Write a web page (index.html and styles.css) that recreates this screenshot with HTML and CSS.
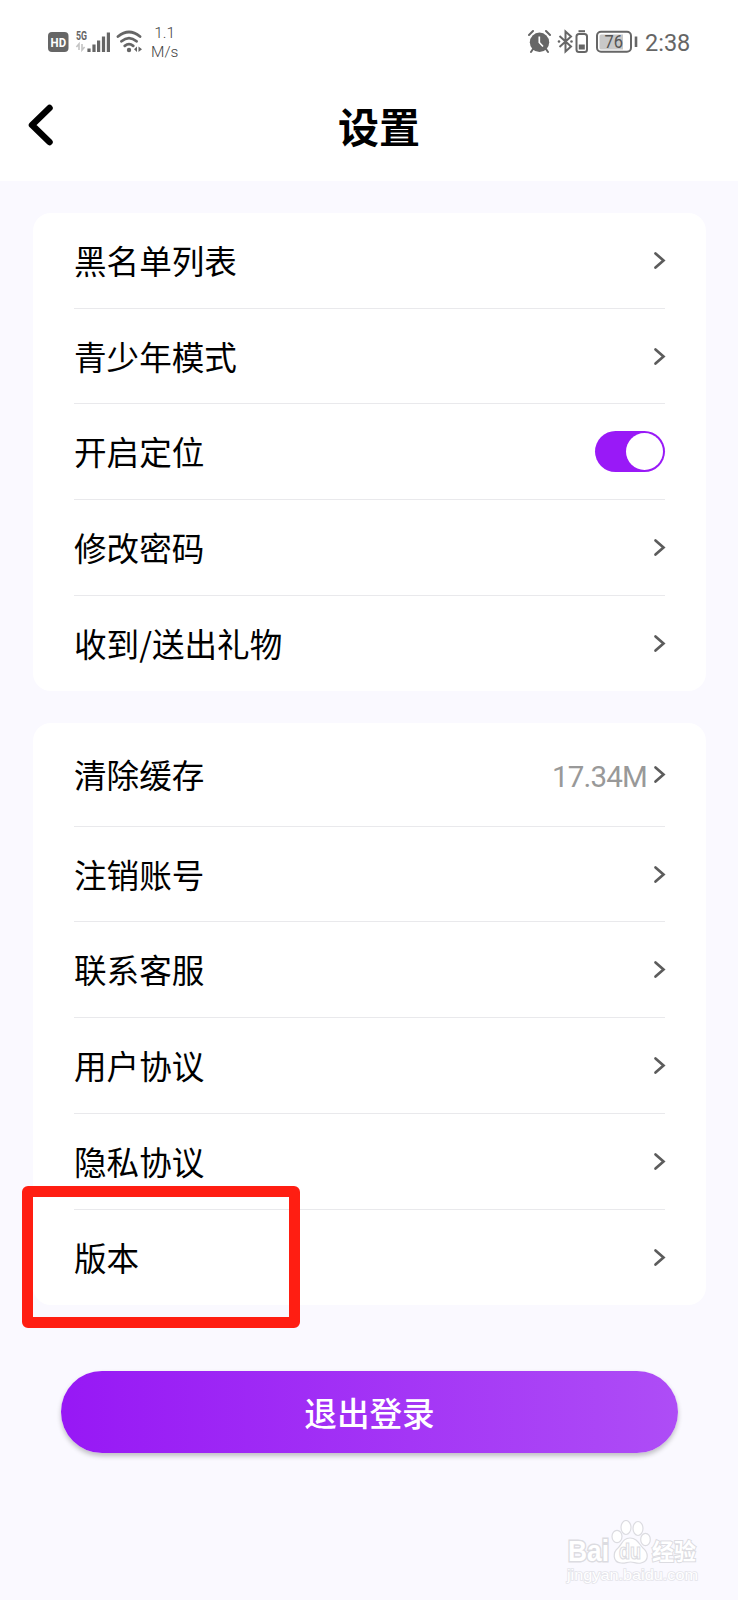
FILE: index.html
```html
<!DOCTYPE html>
<html lang="zh-CN">
<head>
<meta charset="utf-8">
<title>设置</title>
<link rel="stylesheet" href="styles.css">
</head>
<body>
	<svg width="0" height="0" class="defs">
		<symbol id="arrow" viewBox="0 0 13 19"><path d="M2.5 2.5L10.5 9.5L2.5 16.5" fill="none" stroke="#5c5c5c" stroke-width="2.7" stroke-linecap="round" stroke-linejoin="miter"/></symbol>
	</svg>
	<div class="status">
		<svg class="status-left" width="94" height="26" viewBox="0 0 94 26">
			<rect x="0" y="3" width="20.5" height="20" rx="4" fill="#666"/>
			<text x="2.6" y="17.8" class="hd" textLength="15.5" lengthAdjust="spacingAndGlyphs">HD</text>
			<text x="28" y="10.5" class="g5" textLength="11" lengthAdjust="spacingAndGlyphs">5G</text>
			<path d="M31 21V15L28.4 18M34 15V21L36.6 18" fill="none" stroke="#c4c4c4" stroke-width="1.6"/>
			<path d="M41 19.5V23M46 15.5V23M50.6 11.5V23M55.5 7.5V23M60.4 3.5V23" stroke="#666" stroke-width="3.2"/>
			<path d="M70 7.5Q81 -1.5 92 7.5M73.5 12.3Q81 6 88.5 12.3M76.8 16.8Q81 13.5 85.2 16.8" fill="none" stroke="#666" stroke-width="2.8" stroke-linecap="round"/>
			<circle cx="81" cy="21" r="2.2" fill="#666"/>
			<path d="M89 17.5V23L86 20.2ZM90.5 17.5V23L94 20.2Z" fill="#666"/>
		</svg>
		<div class="speed">1.1<br>M/s</div>
		<svg class="status-right" width="111" height="26" viewBox="0 0 111 26">
			<circle cx="11.5" cy="13.3" r="9.7" fill="#666"/>
			<path d="M1 6L5 2M22 6L18 2M5 20L3 23M18 20L20 23" stroke="#666" stroke-width="2" stroke-linecap="round"/>
			<path d="M11.3 7.5V13.5L15 17.5" fill="none" stroke="#fff" stroke-width="1.7"/>
			<path d="M31.5 7L43 17.5L37.5 22.5V2.5L43 7.5L31.5 18" fill="none" stroke="#666" stroke-width="2"/>
			<circle cx="31" cy="12.5" r="1.3" fill="#666"/><circle cx="43.5" cy="12.5" r="1.3" fill="#666"/>
			<rect x="48.5" y="5" width="10.5" height="18" rx="2.500" fill="none" stroke="#666" stroke-width="2"/>
			<path d="M50.5 2.2H57" stroke="#666" stroke-width="2"/>
			<rect x="50.8" y="15.5" width="6" height="5" fill="#666"/>
			<rect x="69" y="2.8" width="34" height="20" rx="4" fill="none" stroke="#666" stroke-width="2"/>
			<path d="M73 5.5H95V20.5H73Q71.5 20.5 71.5 19V7Q71.5 5.5 73 5.5Z" fill="#c8c8c8"/>
			<text x="76.5" y="18.8" class="battery" textLength="18.5" lengthAdjust="spacingAndGlyphs">76</text>
			<path d="M108 7.5V18" stroke="#666" stroke-width="2.6"/>
		</svg>
		<div class="clock">2:38</div>
	</div>
	<div class="header">
		<svg class="back" width="26" height="42" viewBox="0 0 26 42"><path d="M21.5 4L4 21L21.5 38" fill="none" stroke="#000" stroke-width="6.5" stroke-linecap="round" stroke-linejoin="round"/></svg>
		<h1>设置</h1>
	</div>
	<div class="main">
		<div class="card">
			<div class="row"><span>黑名单列表</span><svg class="arrow"><use href="#arrow"/></svg></div>
			<div class="row"><span>青少年模式</span><svg class="arrow"><use href="#arrow"/></svg></div>
			<div class="row"><span>开启定位</span><div class="switch"><i></i></div></div>
			<div class="row"><span>修改密码</span><svg class="arrow"><use href="#arrow"/></svg></div>
			<div class="row"><span>收到/送出礼物</span><svg class="arrow"><use href="#arrow"/></svg></div>
		</div>
		<div class="card">
			<div class="row tall"><span>清除缓存</span><em>17.34M</em><svg class="arrow"><use href="#arrow"/></svg></div>
			<div class="row"><span>注销账号</span><svg class="arrow"><use href="#arrow"/></svg></div>
			<div class="row"><span>联系客服</span><svg class="arrow"><use href="#arrow"/></svg></div>
			<div class="row"><span>用户协议</span><svg class="arrow"><use href="#arrow"/></svg></div>
			<div class="row"><span>隐私协议</span><svg class="arrow"><use href="#arrow"/></svg></div>
			<div class="row"><span>版本</span><svg class="arrow"><use href="#arrow"/></svg><div class="mark"></div></div>
		</div>
		<div class="logout">退出登录</div>
	</div>
	<svg class="watermark" width="140" height="70" viewBox="0 0 140 70">
		<g fill="#fff" stroke="#dcdce1" stroke-width="1.2">
			<text x="8" y="40.500" class="wm-logo" textLength="41" lengthAdjust="spacingAndGlyphs">Bai</text>
			<ellipse cx="57" cy="16.5" rx="5" ry="6.2"/>
			<ellipse cx="66" cy="7.5" rx="5" ry="7"/>
			<ellipse cx="78" cy="8.5" rx="5" ry="7"/>
			<ellipse cx="85.5" cy="19.5" rx="4.8" ry="6.2"/>
			<path d="M70 18C63 18 62 24 58 28C53 32 52 42 61 43C65 43.5 67 42 70.5 42C74 42 77 44 81 43C90 41 88 32 83 28C79 24 77 18 70 18Z"/>
			<text x="59" y="38.5" class="wm-du" textLength="22" lengthAdjust="spacingAndGlyphs">du</text>
			<text x="92" y="40" class="wm-cn" textLength="44" lengthAdjust="spacingAndGlyphs">经验</text>
		</g>
		<text x="7" y="59.5" class="wm-url" textLength="131" lengthAdjust="spacingAndGlyphs">jingyan.baidu.com</text>
	</svg>
</body>
</html>
```
FILE: styles.css
```css
body{
	margin:0;
	height:1600px;
	overflow:hidden;
	position:relative;
	background:#faf9ff;
	color:#000;
	font:400 32.6px/48px "Noto Sans CJK SC", sans-serif;
}
.defs{position:absolute;}
.status{
	box-sizing:border-box;
	height:80px;
	padding:4px 48px 0;
	display:flex;
	align-items:center;
	background:#fff;
	color:#666;
	font-family:Roboto, sans-serif;
}
.hd, .g5, .battery{font-family:Roboto, sans-serif;}
.hd{font-size:13px; font-weight:700; fill:#fff;}
.g5{font-size:12px; font-weight:700; fill:#666;}
.battery{font-size:18px; fill:#555;}
.speed{
	margin-left:9px;
	padding-top:1px;
	color:#444;
	font-size:15.5px;
	font-weight:300;
	line-height:19px;
	text-align:center;
}
.status-right{margin-left:auto;}
.clock{
	width:45px;
	margin-left:6px;
	padding-top:2px;
	font-size:23.5px;
	line-height:28px;
	white-space:nowrap;
}
.header{
	box-sizing:border-box;
	height:101px;
	padding:0 28px 11px;
	display:flex;
	align-items:center;
	background:#fff;
}
.header h1{
	flex:1;
	margin:0 6px 0 0;
	font-size:41px;
	font-weight:700;
	line-height:60px;
	text-align:center;
}
.main{padding:32px 32px 0 33px;}
.card{
	padding:0 41px;
	margin-bottom:32px;
	border-radius:18px;
	background:#fff;
}
.row{
	box-sizing:border-box;
	height:95.7px;
	border-bottom:1px solid #e9e9ec;
	display:flex;
	align-items:center;
	position:relative;
}
.row:last-child{height:95px; border-bottom:0;}
.row span{flex:1; padding-bottom:1px;}
.row em{
	margin-right:6px;
	padding-top:5px;
	color:#999;
	font:400 29.5px/36px Roboto, sans-serif;
	letter-spacing:-.8px;
}
.row.tall{height:104px;}
.arrow{width:13px; height:19px; margin-right:-1px;}
.switch{
	box-sizing:border-box;
	width:70px;
	height:41px;
	padding:2px;
	border-radius:21px;
	background:#9919f7;
	display:flex;
	justify-content:flex-end;
}
.switch i{width:37px; height:37px; border-radius:50%; background:#fff;}
/* red frame around the last row */
.mark{
	box-sizing:border-box;
	position:absolute;
	left:-52px;
	top:-24px;
	width:278px;
	height:142px;
	border:11px solid #ff1e12;
	border-radius:6px;
}
.logout{
	height:82px;
	margin:66px 28px 0;
	border-radius:41px;
	background:linear-gradient(90deg, #9718f5, #ae4df6);
	box-shadow:0 3px 5px rgba(0,0,0,.24);
	color:#fff;
	font-weight:500;
	line-height:81px;
	text-align:center;
}
/* corner logo, white letters with a thin grey outline */
.watermark{position:absolute; left:560px; top:1520px;}
.wm-logo{font:700 29px "Liberation Sans", sans-serif; stroke-width:3px; paint-order:stroke;}
.wm-du{font:700 22px "Liberation Sans", sans-serif;}
.wm-cn{font:700 23px "Noto Sans CJK SC", sans-serif; stroke-width:2px; paint-order:stroke;}
.wm-url{font:400 15px "Liberation Sans", sans-serif; fill:#fff; stroke:#e4e4ea; stroke-width:1.5px; paint-order:stroke;}
```
